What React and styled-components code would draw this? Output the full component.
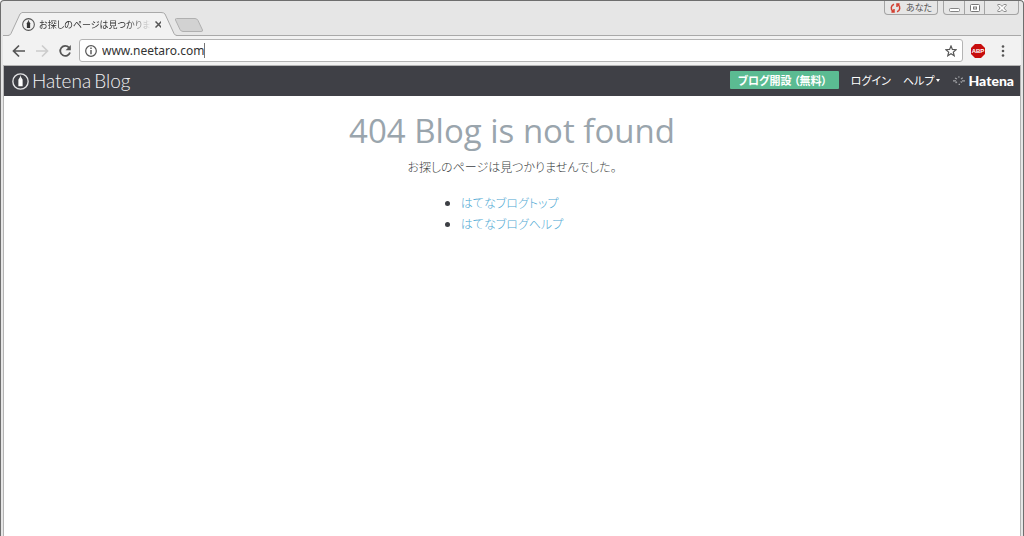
import React from 'react';
import styled, { createGlobalStyle } from 'styled-components';

const ArrowIcon = ({ flip }) => (
  <svg width="14" height="14" viewBox="0 0 14 14" fill="none" stroke="currentColor" strokeWidth="1.7">
    <path d={flip ? 'M1 7h11M7 1.5L12.5 7 7 12.5' : 'M13 7H2M7 1.5L1.5 7 7 12.5'} />
  </svg>
);

const ReloadIcon = () => (
  <svg width="14" height="14" viewBox="0 0 14 14">
    <path d="M11 3.6A5 5 0 1 0 12 8.5" fill="none" stroke="#555" strokeWidth="1.8" />
    <path d="M12.8 1v5.2H7.6z" fill="#555" />
  </svg>
);

const InfoIcon = () => (
  <svg width="12" height="12" viewBox="0 0 12 12">
    <circle cx="6" cy="6" r="5.3" fill="none" stroke="#555" strokeWidth="1.2" />
    <path d="M6 2.6v1.4M6 5v4.2" stroke="#555" strokeWidth="1.4" />
  </svg>
);

const StarIcon = () => (
  <svg width="12" height="12" viewBox="0 0 12 12">
    <path
      d="M6 1l1.4 3.4 3.7.3-2.8 2.4.9 3.6L6 8.8l-3.2 1.9.9-3.6L.9 4.7l3.7-.3z"
      fill="none"
      stroke="#555"
      strokeWidth="1.2"
    />
  </svg>
);

const AdblockIcon = () => (
  <svg width="14" height="14" viewBox="0 0 14 14">
    <path d="M4 0h6l4 4v6l-4 4H4l-4-4V4z" fill="#c70d0d" />
    <text x="7" y="9" fill="#fff" fontSize="6" fontWeight="700" textAnchor="middle" fontFamily="Liberation Sans">
      ABP
    </text>
  </svg>
);

const DotsIcon = () => (
  <svg width="4" height="14" viewBox="0 0 4 14" fill="#555">
    <circle cx="2" cy="2.5" r="1.3" />
    <circle cx="2" cy="7" r="1.3" />
    <circle cx="2" cy="11.5" r="1.3" />
  </svg>
);

const PenIcon = ({ size, ring, nib }) => (
  <svg width={size} height={size} viewBox="0 0 16 16">
    <circle cx="8" cy="8" r="7.2" fill="none" stroke={ring} strokeWidth="1.3" />
    <path d="M8 3L6 6.4v6h4v-6z" fill={nib} />
    <path d="M8 2.5v4" stroke={ring} strokeWidth="0.6" />
  </svg>
);

const SyncIcon = () => (
  <svg width="11" height="10" viewBox="0 0 11 10" fill="none" stroke="#d23f31" strokeWidth="1.5">
    <path d="M4 1.2A4 4 0 0 0 3 8.3M1.4 9H4V6M7 8.8A4 4 0 0 0 8 1.7M9.6 1H7v3" />
  </svg>
);

const HatenaMark = () => (
  <svg width="14" height="10" viewBox="0 0 14 10" stroke="#a2a3a7" strokeWidth="1.2" fill="none">
    <path d="M1 4.8h3M3 2l2 1M6 1h1.6M9 3l1.8-1.2M10 4.8h3M8.6 5.6L10 6.6M5 5.8L3.6 7M6.6 8.4H8" />
  </svg>
);

const MinimizeIcon = () => (
  <svg width="11" height="10" viewBox="0 0 11 10">
    <rect x="0.5" y="5.5" width="10" height="3" rx="1" fill="#fff" stroke="#858585" />
  </svg>
);

const MaximizeIcon = () => (
  <svg width="10" height="10" viewBox="0 0 10 10" fill="#fff" stroke="#777">
    <rect x="0.5" y="1.5" width="9" height="7" rx="1" />
    <rect x="3.5" y="4" width="3" height="2" />
  </svg>
);

const CloseWindowIcon = () => (
  <svg width="10" height="10" viewBox="0 0 10 10">
    <path
      d="M.8 1.5h2.4L5 3.4l1.8-1.9h2.4v1L6.8 5l2.4 2.5v1H6.8L5 6.6 3.2 8.5H.8v-1L3.2 5 .8 2.5z"
      fill="#fff"
      stroke="#858585"
      strokeWidth="0.9"
    />
  </svg>
);

function TabStrip() {
  return (
    <Strip>
      <Tab>
        <svg width="16" height="24" viewBox="0 0 16 24">
          <path d="M0 24L3 22 12 2Q13 .5 16 .5V24z" fill="#f2f2f2" />
          <path d="M0 23.5Q2 23.5 3 21.5L12 2Q13 .5 16 .5" fill="none" stroke="#a9a9a9" />
        </svg>
        <TabBody>
          <PenIcon size={13} ring="#555" nib="#333" />
          <TabTitle>お探しのページは見つかりませ</TabTitle>
          <TabClose aria-label="タブを閉じる">
            <svg width="7" height="7" viewBox="0 0 7 7" stroke="#555" strokeWidth="1.5">
              <path d="M.5 .5l6 6M6.5 .5l-6 6" />
            </svg>
          </TabClose>
        </TabBody>
        <svg width="16" height="24" viewBox="0 0 16 24">
          <path d="M16 24L13 22 4 2Q3 .5 0 .5V24z" fill="#f2f2f2" />
          <path d="M16 23.5Q14 23.5 13 21.5L4 2Q3 .5 0 .5" fill="none" stroke="#a9a9a9" />
        </svg>
      </Tab>
      <NewTab aria-label="新しいタブ">
        <svg width="30" height="14" viewBox="0 0 30 14">
          <path
            d="M2.5 .5H21Q23 .5 24 2.5L28.5 12Q29 13.5 27 13.5H9Q7 13.5 6 11.5L1.5 2Q1 .5 2.5 .5z"
            fill="#d2d2d2"
            stroke="#b0b0b0"
          />
        </svg>
      </NewTab>
      <WindowControls>
        <UserButton>
          <SyncIcon />
          あなた
        </UserButton>
        <ControlGroup>
          <ControlButton aria-label="最小化">
            <MinimizeIcon />
          </ControlButton>
          <ControlButton aria-label="最大化">
            <MaximizeIcon />
          </ControlButton>
          <ControlButton $wide aria-label="閉じる">
            <CloseWindowIcon />
          </ControlButton>
        </ControlGroup>
      </WindowControls>
    </Strip>
  );
}

function Toolbar() {
  return (
    <ToolbarRow>
      <ToolButton aria-label="戻る">
        <ArrowIcon />
      </ToolButton>
      <ToolButton $muted aria-label="進む">
        <ArrowIcon flip />
      </ToolButton>
      <ToolButton aria-label="再読み込み">
        <ReloadIcon />
      </ToolButton>
      <AddressBar>
        <InfoIcon />
        <AddressField>
          <AddressInput aria-label="アドレス" defaultValue="www.neetaro.com" />
          <Caret />
        </AddressField>
        <StarIcon />
      </AddressBar>
      <ToolButton aria-label="Adblock Plus">
        <AdblockIcon />
      </ToolButton>
      <ToolButton $wide aria-label="メニュー">
        <DotsIcon />
      </ToolButton>
    </ToolbarRow>
  );
}

function BlogHeader() {
  return (
    <Header>
      <BlogLogo href="#">
        <PenIcon size={17} ring="#e4e4e6" nib="#fff" />
        <LogoWords>
          <span>Hatena</span>
          <span>Blog</span>
        </LogoWords>
      </BlogLogo>
      <HeaderNav>
        <OpenBlog href="#">ブログ開設 （無料）</OpenBlog>
        <NavLink href="#">ログイン</NavLink>
        <NavLink href="#">
          ヘルプ
          <Triangle />
        </NavLink>
        <HatenaLogo href="#">
          <HatenaMark />
          Hatena
        </HatenaLogo>
      </HeaderNav>
    </Header>
  );
}

function App() {
  return (
    <Browser>
      <GlobalStyle />
      <TabStrip />
      <Toolbar />
      <Page>
        <BlogHeader />
        <Main>
          <Title>404 Blog is not found</Title>
          <Message>お探しのページは見つかりませんでした。</Message>
          <LinkList>
            <li>
              <PageLink href="#">はてなブログトップ</PageLink>
            </li>
            <li>
              <PageLink href="#">はてなブログヘルプ</PageLink>
            </li>
          </LinkList>
        </Main>
      </Page>
    </Browser>
  );
}

const GlobalStyle = createGlobalStyle`
  * {
    box-sizing: border-box;
  }

  body {
    margin: 0;
    font-family: 'Liberation Sans', 'Noto Sans CJK JP', sans-serif;
  }

  a {
    text-decoration: none;
  }

  svg {
    display: block;
    flex-shrink: 0;
  }
`;

const Button = styled.button`
  padding: 0;
  border: 0;
  background: none;
`;

const Browser = styled.div`
  display: flex;
  flex-direction: column;
  min-height: 100vh;
  border: 1px solid #6e6e6e;
  border-bottom: 0;
  border-radius: 4px 4px 0 0;
  background: #e6e6e6;
`;

const Strip = styled.div`
  display: flex;
  height: 34px;
  padding-left: 7px;
`;

const Tab = styled.div`
  display: flex;
  align-self: flex-end;
  height: 24px;
  margin-bottom: -1px;
  z-index: 1;
`;

const TabBody = styled.div`
  display: flex;
  align-items: center;
  width: 140px;
  margin: 0 -1px 0 -2px;
  border-top: 1px solid #a9a9a9;
  background: #f2f2f2;
`;

const TabTitle = styled.span`
  width: 112px;
  margin-left: 4px;
  overflow: hidden;
  white-space: nowrap;
  font-family: 'Noto Sans CJK JP', sans-serif;
  font-size: 9px;
  font-feature-settings: 'palt';
  color: #333;
  mask-image: linear-gradient(to right, #000 80%, transparent);
`;

const TabClose = styled(Button)`
  margin-left: 4px;
`;

const NewTab = styled(Button)`
  align-self: flex-end;
  margin: 0 0 3px -3px;
`;

const WindowControls = styled.div`
  display: flex;
  gap: 5px;
  height: 14px;
  margin-left: auto;
  padding-right: 4px;
`;

const UserButton = styled(Button)`
  display: flex;
  align-items: center;
  justify-content: center;
  gap: 5px;
  width: 54px;
  border: 1px solid #a4a4a4;
  border-top: 0;
  border-radius: 0 0 4px 4px;
  font-family: 'Noto Sans CJK JP', sans-serif;
  font-size: 9px;
  line-height: 12px;
  font-feature-settings: 'palt';
  color: #555;
`;

const ControlGroup = styled.div`
  display: flex;
  border: 1px solid #a4a4a4;
  border-top: 0;
  border-radius: 0 0 4px 4px;
`;

const ControlButton = styled(Button)`
  display: flex;
  align-items: center;
  justify-content: center;
  width: ${({ $wide }) => ($wide ? 34 : 20)}px;

  & + & {
    border-left: 1px solid #a4a4a4;
  }
`;

const ToolbarRow = styled.div`
  display: flex;
  align-items: center;
  height: 30px;
  margin: 0 2px;
  padding: 0 4px;
  border-top: 1px solid #a9a9a9;
  background: #f2f2f2;
`;

const ToolButton = styled(Button)`
  display: flex;
  align-items: center;
  justify-content: center;
  width: ${({ $wide }) => ($wide ? 28 : 23)}px;
  color: ${({ $muted }) => ($muted ? '#ccc' : '#555')};
`;

const AddressBar = styled.div`
  display: flex;
  flex: 1;
  align-items: center;
  height: 23px;
  margin: 0 3px;
  padding: 0 5px;
  border: 1px solid #b4b4b4;
  border-radius: 3px;
  background: #fff;
`;

const AddressField = styled.div`
  display: flex;
  flex: 1;
  align-items: center;
  margin-left: 5px;
`;

const AddressInput = styled.input`
  field-sizing: content;
  padding: 0;
  border: 0;
  outline: 0;
  background: none;
  font-family: 'Noto Sans', sans-serif;
  font-size: 12px;
  line-height: 18px;
  color: #333;
`;

const Caret = styled.span`
  width: 1px;
  height: 15px;
  background: #777;
`;

const Page = styled.div`
  flex: 1;
  margin: 0 2px;
  border: 1px solid #b4b4b4;
  border-bottom: 0;
  background: #fff;
`;

const Header = styled.header`
  display: flex;
  align-items: center;
  justify-content: space-between;
  height: 30px;
  padding: 0 6px 0 8px;
  background: #3f4046;
`;

const BlogLogo = styled.a`
  display: flex;
  align-items: center;
  gap: 3px;
  font-family: Lato, sans-serif;
  font-size: 19px;
  font-weight: 300;
  line-height: 20px;
  color: #f2f2f4;
`;

const LogoWords = styled.span`
  display: flex;
  gap: 3px;
`;

const HeaderNav = styled.nav`
  display: flex;
  align-items: center;
  gap: 12px;
  padding-bottom: 2px;
  font-family: 'Noto Sans CJK JP', sans-serif;
  font-size: 11px;
  line-height: 18px;
  font-feature-settings: 'palt';
`;

const OpenBlog = styled.a`
  width: 109px;
  padding-left: 8px;
  border-radius: 1px;
  background: #5bbb92;
  font-weight: 700;
  color: #fff;
`;

const NavLink = styled.a`
  display: flex;
  align-items: center;
  color: #fff;
`;

const Triangle = styled.span`
  margin-left: 2px;
  border: 2px solid transparent;
  border-top: 3px solid #fff;
  border-bottom: 0;
`;

const HatenaLogo = styled.a`
  display: flex;
  align-items: center;
  gap: 2px;
  padding-top: 2px;
  font-family: Lato, sans-serif;
  font-size: 14px;
  font-weight: 900;
  color: #fff;
`;

const Main = styled.main`
  display: flex;
  flex-direction: column;
  align-items: center;
  padding-top: 15px;
  font-family: 'Noto Sans CJK JP', sans-serif;
  font-size: 12px;
  font-weight: 300;
  line-height: 21px;
  font-feature-settings: 'palt';
  color: #3d3f44;
`;

const Title = styled.h1`
  margin: 0;
  font-family: 'Open Sans', sans-serif;
  font-size: 33px;
  font-weight: 400;
  line-height: 40px;
  color: #9aa5ad;
`;

const Message = styled.p`
  margin: 5px 0 15px;
`;

const LinkList = styled.ul`
  margin: 0;
  padding-left: 0;
`;

const PageLink = styled.a`
  color: #4fa9d3;
`;

export default App;
